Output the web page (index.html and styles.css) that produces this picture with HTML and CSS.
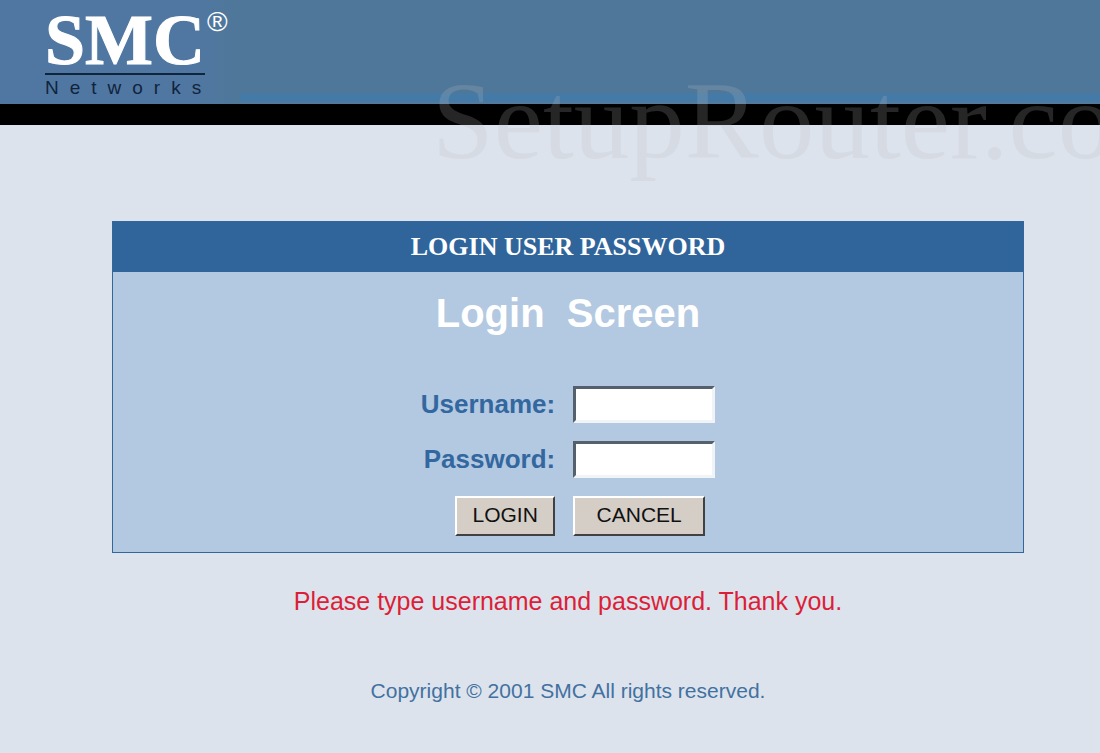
FILE: index.html
```
<!DOCTYPE html>
<html lang="en">
<head>
  <meta charset="UTF-8" />
  <meta name="viewport" content="width=device-width, initial-scale=1" />
  <title>SMC Networks - Login</title>
  <link rel="stylesheet" href="styles.css">
</head>
<body>
  <header class="header">
    <div class="logo">
      <div class="logo-name">SMC<span class="logo-mark">®</span></div>
      <div class="logo-sub">Networks</div>
    </div>
  </header>
  <div class="watermark">SetupRouter.com</div>

  <main class="content">
    <section class="panel">
      <h1>LOGIN USER PASSWORD</h1>
      <h2>Login&nbsp; Screen</h2>
      <form class="login-form">
        <label for="username">Username:</label>
        <input type="text" id="username" name="username" />
        <label for="password">Password:</label>
        <input type="password" id="password" name="password" />
        <button type="submit" class="login-btn">LOGIN</button>
        <button type="reset" class="cancel-btn">CANCEL</button>
      </form>
    </section>
    <p class="message">Please type username and password. Thank you.</p>
    <footer>Copyright © 2001 SMC All rights reserved.</footer>
  </main>
</body>
</html>
```
FILE: styles.css
```
* {
  box-sizing: border-box;
}

body {
  margin: 0;
  position: relative;
  min-height: 100vh;
  overflow-x: hidden;
  background-color: #dce3ed;
  font-family: "Liberation Sans", Arial, sans-serif;
}

.header {
  background: linear-gradient(#4f7799 0, #4f7799 88%, #437aa8 92%, #437aa8 96%, #55799a 100%);
  border-bottom: 21px solid #000;
}

.logo {
  width: 240px;
  height: 104px;
  padding: 8px 0 0 45px;
  background: linear-gradient(to right, #5077a2 80%, #4f7799);
}

.logo-name {
  position: relative;
  width: 160px;
  height: 67px;
  border-bottom: 2px solid #10243c;
  font-family: "Liberation Serif", "Times New Roman", serif;
  font-size: 72px;
  font-weight: bold;
  line-height: 64px;
  color: #fff;
  -webkit-text-stroke: 1px #fff;
}

/* registered mark hangs off the top right of the name */
.logo-mark {
  position: absolute;
  top: 0;
  left: 162px;
  font-family: "Liberation Sans", Arial, sans-serif;
  font-size: 28px;
  font-weight: normal;
  line-height: 28px;
  -webkit-text-stroke: 0;
}

.logo-sub {
  font-size: 19px;
  line-height: 25px;
  letter-spacing: 11px;
  color: #10243c;
}

.watermark {
  position: absolute;
  top: 57px;
  left: 432px;
  right: 0;
  overflow: hidden;
  white-space: nowrap;
  font-family: "Liberation Serif", "Times New Roman", serif;
  font-size: 111px;
  line-height: 128px;
  color: rgba(190, 190, 190, 0.2);
  pointer-events: none;
}

.content {
  padding: 96px 76px 40px 112px;
  text-align: center;
}

.panel {
  border: 1px solid #33679b;
  background-color: #b3c9e1;
}

.panel h1 {
  margin: 0;
  background-color: #30659b;
  color: #fff;
  font-family: "Liberation Serif", "Times New Roman", serif;
  font-size: 26px;
  line-height: 50px;
}

.panel h2 {
  margin: 0;
  padding: 18px 0;
  color: #fff;
  font-size: 40px;
  line-height: 46px;
}

.login-form {
  display: grid;
  grid-template-columns: auto 142px;
  justify-content: center;
  align-items: center;
  gap: 18px;
  padding: 32px 0 16px;
}

.login-form label {
  text-align: right;
  color: #33679f;
  font-size: 26px;
  font-weight: bold;
}

.login-form input {
  width: 100%;
  height: 37px;
  padding: 2px 6px;
  border: 3px solid;
  border-color: #55606c #f1f4f7 #f1f4f7 #55606c;
  background-color: #fff;
  font-size: 21px;
}

.login-form button {
  height: 40px;
  padding: 0 0 2px;
  border: 2px solid;
  border-color: #fff #414141 #414141 #fff;
  background-color: #d5cec6;
  color: #111;
  font-family: inherit;
  font-size: 21px;
}

.login-btn {
  justify-self: end;
  width: 100px;
}

.cancel-btn {
  width: 132px;
}

.message {
  margin: 32px 0 60px;
  color: #dc1f38;
  font-size: 25px;
  line-height: 32px;
}

footer {
  color: #43719f;
  font-size: 21px;
  line-height: 28px;
}
```
